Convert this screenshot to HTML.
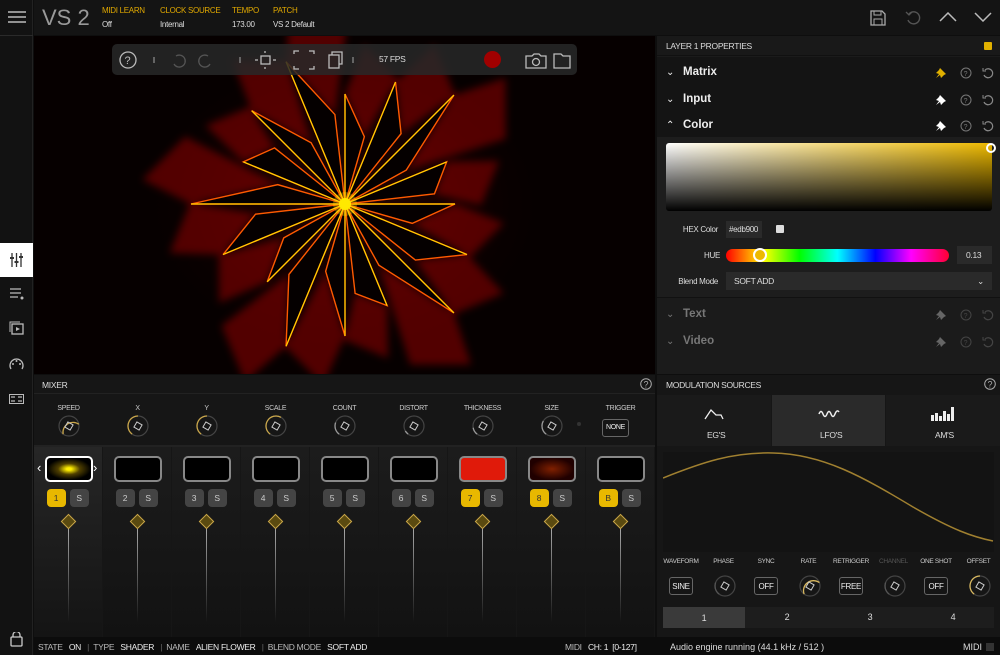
<!DOCTYPE html>
<html><head><meta charset="utf-8"><style>
*{box-sizing:border-box;margin:0;padding:0}
body{width:1000px;height:655px;background:#0e0e0e;font-family:"Liberation Sans Narrow","Liberation Sans",sans-serif;color:#ddd;position:relative;overflow:hidden;font-size:9px;letter-spacing:-0.3px}
.abs{position:absolute}
.y{color:#e0a800}
.lbl{font-size:7px;color:#ccc;text-align:center;letter-spacing:-0.3px}
.btn{border:1px solid #666;border-radius:3px;color:#eee;font-size:8px;text-align:center;background:#151515}
</style></head><body>
<!-- sidebar -->
<div class="abs" style="left:0;top:0;width:33px;height:655px;background:#121212;border-right:1px solid #222"></div>
<div class="abs" style="left:0;top:35px;width:33px;height:1px;background:#2a2a2a"></div>
<svg class="abs" style="left:8px;top:10px" width="18" height="14"><path d="M0 2H18M0 7H18M0 12H18" stroke="#bbb" stroke-width="1.5"/></svg>
<div class="abs" style="left:0;top:243px;width:33px;height:34px;background:#fff"></div>
<svg class="abs" style="left:10px;top:253px" width="13" height="14"><path d="M2 0V14M6.5 0V14M11 0V14" stroke="#333" stroke-width="1.3"/><path d="M0 5H4M4.5 9H8.5M9 4H13" stroke="#333" stroke-width="2"/></svg>
<svg class="abs" style="left:10px;top:288px" width="14" height="12"><path d="M0 1H11M0 5H11M0 9H8" stroke="#bbb" stroke-width="1.3"/><circle cx="12" cy="10" r="1.5" fill="#bbb"/></svg>
<svg class="abs" style="left:9px;top:321px" width="15" height="14"><rect x="3" y="3" width="11" height="10" fill="none" stroke="#bbb" stroke-width="1.3"/><path d="M1 11V1H11" fill="none" stroke="#bbb"/><path d="M7 6L11 8L7 10Z" fill="#bbb"/></svg>
<svg class="abs" style="left:9px;top:357px" width="15" height="14"><path d="M2 12A6.5 6.5 0 1 1 13 12" fill="none" stroke="#bbb" stroke-width="1.3"/><circle cx="4" cy="7" r="1" fill="#bbb"/><circle cx="7.5" cy="4" r="1" fill="#bbb"/><circle cx="11" cy="7" r="1" fill="#bbb"/></svg>
<svg class="abs" style="left:9px;top:394px" width="15" height="10"><rect x="0.5" y="0.5" width="14" height="9" fill="none" stroke="#bbb"/><path d="M2 3H6M9 3H13M2 7H6M9 7H13" stroke="#bbb" stroke-width="1.3"/></svg>
<svg class="abs" style="left:10px;top:632px" width="13" height="15"><path d="M3 5V3A3.5 3.5 0 0 1 10 3V5" fill="none" stroke="#ccc" stroke-width="1.3"/><rect x="1" y="5" width="11" height="9" rx="1" fill="none" stroke="#ccc" stroke-width="1.3"/></svg>

<!-- top bar -->
<div class="abs" style="left:34px;top:0;width:966px;height:35px;background:#141414"></div>
<div class="abs" style="left:42px;top:5px;font-size:22px;color:#999;font-family:'Liberation Sans',sans-serif;letter-spacing:0">VS 2</div>
<div class="abs y" style="left:102px;top:6px;font-size:8px">MIDI LEARN</div><div class="abs" style="left:102px;top:20px;font-size:8px">Off</div>
<div class="abs y" style="left:160px;top:6px;font-size:8px">CLOCK SOURCE</div><div class="abs" style="left:160px;top:20px;font-size:8px">Internal</div>
<div class="abs y" style="left:232px;top:6px;font-size:8px">TEMPO</div><div class="abs" style="left:232px;top:20px;font-size:8px">173.00</div>
<div class="abs y" style="left:273px;top:6px;font-size:8px">PATCH</div><div class="abs" style="left:273px;top:20px;font-size:8px">VS 2 Default</div>
<svg class="abs" style="left:870px;top:10px" width="16" height="16"><path d="M1 1H12L15 4V15H1Z" fill="none" stroke="#aaa" stroke-width="1.3"/><rect x="4" y="1" width="7" height="4" fill="none" stroke="#aaa"/><rect x="4" y="9" width="8" height="6" fill="none" stroke="#aaa"/></svg>
<svg class="abs" style="left:905px;top:10px" width="16" height="16"><path d="M4 4A6 6 0 1 1 3 10" fill="none" stroke="#555" stroke-width="1.4"/><path d="M1 2L4 5L7 2" fill="none" stroke="#555" stroke-width="1.3"/></svg>
<svg class="abs" style="left:939px;top:12px" width="18" height="10"><path d="M1 9L9 1L17 9" fill="none" stroke="#bbb" stroke-width="1.5"/></svg>
<svg class="abs" style="left:974px;top:12px" width="18" height="10"><path d="M1 1L9 9L17 1" fill="none" stroke="#bbb" stroke-width="1.5"/></svg>

<!-- preview -->
<div class="abs" style="left:34px;top:36px;width:621px;height:338px;background:#060000;overflow:hidden">
<svg id="fl" width="621" height="338" style="position:absolute;left:0;top:0">
<defs><radialGradient id="rg" cx="0.5" cy="0.5" r="0.5"><stop offset="0" stop-color="#ff2000" stop-opacity=".6"/><stop offset=".6" stop-color="#a00000" stop-opacity=".25"/><stop offset="1" stop-color="#300000" stop-opacity="0"/></radialGradient>
<filter id="bl"><feGaussianBlur stdDeviation="4"/></filter></defs>
<ellipse cx="311" cy="168" rx="200" ry="150" fill="url(#rg)" opacity=".25"/>
<g id="glow" filter="url(#bl)"></g><g id="star"></g>
<circle cx="311" cy="168" r="6" fill="#ffee00"/><circle cx="311" cy="168" r="12" fill="#ffdd00" opacity=".3"/>
</svg>
</div>
<div class="abs" style="left:112px;top:44px;width:465px;height:31px;background:rgba(40,40,40,.85);border-radius:5px"></div>
<svg class="abs" style="left:118px;top:48px" width="460" height="24" fill="none" stroke="#bbb" stroke-width="1.3">
<circle cx="10" cy="12" r="8"/><text x="6.5" y="16" font-size="11" fill="#bbb" stroke="none" font-family="Liberation Sans">?</text>
<path d="M36 9V15M122 9V15M235 9V15" stroke="#888"/>
<path d="M58 8A6 6 0 1 1 56 16" stroke="#555"/><path d="M90 8A6 6 0 1 0 92 16" stroke="#555"/>
<rect x="143" y="8" width="9" height="8"/><path d="M140 12H137M155 12H158M147 5V3M147 19V21"/>
<path d="M176 6V3H181M191 3H196V6M196 18V21H191M181 21H176V18"/>
<rect x="211" y="7" width="10" height="13"/><path d="M214 7V4H224V16H221"/>
<path d="M408 8H414L416 6H421L423 8H428V20H408Z"/><circle cx="418" cy="14" r="3.5"/>
<path d="M436 6H443L445 8H452V20H436Z"/>
</svg>
<div class="abs" style="left:379px;top:54px;font-size:8.5px;color:#ddd">57 FPS</div>
<div class="abs" style="left:484px;top:51px;width:17px;height:17px;border-radius:50%;background:#a00000"></div>

<!-- right properties -->
<div class="abs" style="left:657px;top:36px;width:343px;height:338px;background:#1b1b1b"></div>
<div class="abs" style="left:657px;top:36px;width:343px;height:20px;background:#191919;border-bottom:1px solid #111"></div>
<div class="abs" style="left:666px;top:41px;font-size:8.5px;color:#ddd">LAYER 1 PROPERTIES</div>
<div class="abs" style="left:984px;top:42px;width:8px;height:8px;background:#e0b000;border-radius:1px"></div>
<div class="abs" style="left:657px;top:57px;width:343px;height:80px;background:#141414"></div>
<div id="rows"></div>
<div class="abs" style="left:657px;top:137px;width:343px;height:160px;background:#1d1d1d"></div>
<div class="abs" style="left:666px;top:143px;width:326px;height:68px;border-radius:3px;background:linear-gradient(to bottom,rgba(0,0,0,0),#000),linear-gradient(to right,#fff,#edb900)"></div>
<div class="abs" style="left:986px;top:143px;width:10px;height:10px;border:2px solid #fff;border-radius:50%"></div>
<div class="abs" style="left:680px;top:225px;font-size:8px;color:#ddd;width:38px;text-align:right">HEX Color</div>
<div class="abs" style="left:726px;top:221px;width:36px;height:17px;background:#2a2a2a;font-size:8px;padding:4px 3px;color:#ddd">#edb900</div>
<div class="abs" style="left:776px;top:225px;width:8px;height:8px;background:#ddd;border-radius:1px"></div>
<div class="abs" style="left:704px;top:251px;font-size:8px;color:#ddd">HUE</div>
<div class="abs" style="left:726px;top:249px;width:223px;height:13px;border-radius:7px;background:linear-gradient(to right,#f00,#ff0 17%,#0f0 33%,#0ff 50%,#00f 67%,#f0f 83%,#f03)"></div>
<div class="abs" style="left:753px;top:248px;width:14px;height:14px;border-radius:50%;border:2px solid #fff;background:#edb900"></div>
<div class="abs" style="left:957px;top:246px;width:35px;height:18px;background:#2a2a2a;font-size:8.5px;padding:4px 0 0 9px;color:#ddd">0.13</div>
<div class="abs" style="left:672px;top:277px;font-size:8px;color:#ddd;width:46px;text-align:right">Blend Mode</div>
<div class="abs" style="left:726px;top:272px;width:266px;height:18px;background:#2a2a2a;font-size:8.5px;padding:4px 8px;color:#ddd">SOFT ADD<span style="float:right">⌄</span></div>
<div class="abs" style="left:657px;top:297px;width:343px;height:1px;background:#111"></div>

<!-- mixer -->
<div class="abs" style="left:34px;top:375px;width:621px;height:262px;background:#161616"></div>
<div class="abs" style="left:42px;top:380px;font-size:8.5px;color:#ddd">MIXER</div>
<svg class="abs" style="left:640px;top:378px" width="12" height="12"><circle cx="6" cy="6" r="5.3" fill="none" stroke="#aaa"/><text x="3.5" y="9.5" font-size="9" fill="#aaa" font-family="Liberation Sans">?</text></svg>
<div class="abs" style="left:34px;top:393px;width:621px;height:1px;background:#222"></div>
<div class="abs" style="left:34px;top:445px;width:621px;height:2px;background:#222"></div>
<div id="mix"></div>
<div class="abs btn" style="left:602px;top:419px;width:27px;height:18px;padding-top:4px;font-size:7px">NONE</div>
<div class="abs" style="left:577px;top:422px;width:4px;height:4px;border-radius:50%;background:#333"></div>

<!-- bottom bar -->
<div class="abs" style="left:34px;top:637px;width:966px;height:18px;background:#0c0c0c"></div>
<div class="abs" style="left:38px;top:642px;font-size:8.5px;color:#bbb;white-space:nowrap">STATE&nbsp;&nbsp;&nbsp;<span style="color:#eee">ON</span>&nbsp;&nbsp;&nbsp;<span style="color:#666">|</span>&nbsp;&nbsp;TYPE&nbsp;&nbsp;&nbsp;<span style="color:#eee">SHADER</span>&nbsp;&nbsp;&nbsp;<span style="color:#666">|</span>&nbsp;&nbsp;NAME&nbsp;&nbsp;&nbsp;<span style="color:#eee">ALIEN FLOWER</span>&nbsp;&nbsp;&nbsp;<span style="color:#666">|</span>&nbsp;&nbsp;BLEND MODE&nbsp;&nbsp;&nbsp;<span style="color:#eee">SOFT ADD</span></div>
<div class="abs" style="left:565px;top:642px;font-size:8.5px;color:#bbb">MIDI&nbsp;&nbsp;&nbsp;<span style="color:#eee">CH: 1&nbsp;&nbsp;[0-127]</span></div>
<div class="abs" style="left:670px;top:642px;font-size:9px;color:#ddd;font-family:'Liberation Sans',sans-serif;letter-spacing:0">Audio engine running (44.1 kHz / 512 )</div>
<div class="abs" style="left:963px;top:642px;font-size:9px;color:#ddd;font-family:'Liberation Sans',sans-serif;letter-spacing:0">MIDI</div>
<div class="abs" style="left:986px;top:643px;width:8px;height:8px;background:#333"></div>

<!-- modulation -->
<div class="abs" style="left:657px;top:375px;width:343px;height:262px;background:#161616"></div>
<div class="abs" style="left:666px;top:380px;font-size:8.5px;color:#ddd">MODULATION SOURCES</div>
<svg class="abs" style="left:984px;top:378px" width="12" height="12"><circle cx="6" cy="6" r="5.3" fill="none" stroke="#aaa"/><text x="3.5" y="9.5" font-size="9" fill="#aaa" font-family="Liberation Sans">?</text></svg>
<div class="abs" style="left:657px;top:395px;width:114px;height:51px;background:#1a1a1a"></div>
<div class="abs" style="left:772px;top:395px;width:113px;height:51px;background:#2a2a2a"></div>
<div class="abs" style="left:886px;top:395px;width:114px;height:51px;background:#1a1a1a"></div>
<svg class="abs" style="left:704px;top:408px" width="20" height="12"><path d="M1 11L7 2L12 7H17L19 11" fill="none" stroke="#eee" stroke-width="1.3"/></svg>
<svg class="abs" style="left:818px;top:408px" width="22" height="12"><path d="M1 6Q3 1 5 6T9 6T13 6T17 6T21 4" fill="none" stroke="#eee" stroke-width="1.5"/></svg>
<svg class="abs" style="left:931px;top:405px" width="26" height="16" fill="#eee"><rect x="0" y="10" width="3" height="6"/><rect x="4" y="8" width="3" height="8"/><rect x="8" y="11" width="3" height="5"/><rect x="12" y="6" width="3" height="10"/><rect x="16" y="9" width="3" height="7"/><rect x="20" y="2" width="3" height="14"/></svg>
<div class="abs" style="left:707px;top:430px;font-size:8.5px;color:#ddd">EG'S</div>
<div class="abs" style="left:820px;top:430px;font-size:8.5px;color:#ddd">LFO'S</div>
<div class="abs" style="left:935px;top:430px;font-size:8.5px;color:#ddd">AM'S</div>
<div class="abs" style="left:663px;top:452px;width:331px;height:100px;background:#131313"></div>
<svg class="abs" style="left:663px;top:452px" width="331" height="100"><path d="M0 26C40 10 70 0 110 1C160 2 200 25 250 55C290 78 310 85 330 89" fill="none" stroke="#a08030" stroke-width="1.5"/></svg>
<div id="modc"></div>
<div class="abs" style="left:663px;top:607px;width:331px;height:21px;background:#1d1d1d"></div>
<div class="abs" style="left:663px;top:607px;width:82px;height:21px;background:#3a3a3a;text-align:center;font-size:9px;padding-top:6px">1</div>
<div class="abs" style="left:746px;top:612px;width:82px;text-align:center;font-size:9px">2</div>
<div class="abs" style="left:829px;top:612px;width:82px;text-align:center;font-size:9px">3</div>
<div class="abs" style="left:912px;top:612px;width:82px;text-align:center;font-size:9px">4</div>

<script>
(function(){
 var cx=311,cy=168,N=16,s='',g='';
 for(var i=0;i<N;i++){
  var a=i*2*Math.PI/N, R1=110+(i%3)*22, R2=70+(i%2)*20, d=0.28;
  var p1=[cx+R1*Math.cos(a),cy+R1*Math.sin(a)], p2=[cx+R2*Math.cos(a+d),cy+R2*Math.sin(a+d)];
  var R3=R1+50;
  g+='<polygon points="'+p1+' '+(cx+R3*Math.cos(a+0.12))+','+(cy+R3*Math.sin(a+0.12))+' '+(cx+R3*0.85*Math.cos(a+d+0.12))+','+(cy+R3*0.85*Math.sin(a+d+0.12))+' '+p2+'" fill="#b00800" opacity=".45"/>';
  s+='<polygon points="'+cx+','+cy+' '+p1+' '+p2+'" fill="#050000" stroke="#ff5a00" stroke-width="1.4"/>';
  s+='<line x1="'+cx+'" y1="'+cy+'" x2="'+p1[0]+'" y2="'+p1[1]+'" stroke="#ffd000" stroke-width="1.2"/>';
 }
 document.getElementById('star').innerHTML=s;document.getElementById('glow').innerHTML=g;
})();
function knob(x,y,r,col,ang){var a=ang*Math.PI/180;
 return '<svg class="abs" style="left:'+(x-r-2)+'px;top:'+(y-r-2)+'px" width="'+(2*r+4)+'" height="'+(2*r+4)+'"><circle cx="'+(r+2)+'" cy="'+(r+2)+'" r="'+r+'" fill="none" stroke="#444" stroke-width="1.2"/><path d="M'+(r+2+r*Math.cos(2.2))+' '+(r+2+r*Math.sin(2.2))+'A'+r+' '+r+' 0 0 1 '+(r+2+r*Math.cos(a))+' '+(r+2+r*Math.sin(a))+'" fill="none" stroke="'+col+'" stroke-width="1.3"/><rect x="'+(r-1)+'" y="'+(r-1)+'" width="6" height="6" fill="none" stroke="#ccc" transform="rotate(30 '+(r+2)+' '+(r+2)+')"/></svg>';}
var labs=['SPEED','X','Y','SCALE','COUNT','DISTORT','THICKNESS','SIZE','TRIGGER'],h='';
var angs=[-10,-90,-90,-60,200,150,170,210];
for(var i=0;i<9;i++){var cx=34+69*i+34.5;
 h+='<div class="abs" style="left:'+(34+69*i)+'px;top:447px;width:68px;height:190px;background:'+(i==0?'linear-gradient(#262626,#141414)':'linear-gradient(#1c1c1c,#121212)')+'"></div>';
 h+='<div class="abs lbl" style="left:'+(cx-30)+'px;top:405px;width:60px">'+labs[i]+'</div>';
 if(i<8)h+=knob(cx+0.5,426,10,i<4?'#c9a64a':'#999',angs[i]);
 var bg=i==6?'#e01a0a':(i==7?'radial-gradient(#802000,#200000 70%)':(i==0?'radial-gradient(#ffee00 8%,#504000 35%,#000 70%)':'#000'));
 h+='<div class="abs" style="left:'+(cx-24)+'px;top:456px;width:48px;height:26px;border-radius:5px;border:'+(i==0?'2px solid #fff':'2px solid #888')+';background:'+bg+'"></div>';
 var on=(i==0||i==6||i==7||i==8);
 h+='<div class="abs" style="left:'+(cx-22)+'px;top:489px;width:19px;height:18px;border-radius:4px;background:'+(on?'#e8b800':'#444')+';color:'+(on?'#333':'#ccc')+';text-align:center;font-size:8.5px;padding-top:4px">'+(i==8?'B':i+1)+'</div>';
 h+='<div class="abs" style="left:'+(cx+1)+'px;top:489px;width:19px;height:18px;border-radius:4px;background:#444;color:#ccc;text-align:center;font-size:8.5px;padding-top:4px">S</div>';
 h+='<div class="abs" style="left:'+(cx-1)+'px;top:527px;width:1.5px;height:95px;background:linear-gradient(#aaa,rgba(170,170,170,0))"></div>';
 h+='<div class="abs" style="left:'+(cx-5.5)+'px;top:516px;width:11px;height:11px;transform:rotate(45deg);background:#5a4a10;border:1px solid #c9a64a"></div>';
}
h+='<div class="abs" style="left:37px;top:460px;color:#fff;font-size:13px">‹</div><div class="abs" style="left:93px;top:460px;color:#fff;font-size:13px">›</div>';
document.getElementById('mix').innerHTML=h;
var rows=[['Matrix',73,'#e0b000',1],['Input',100,'#fff',1],['Color',126,'#fff',1],['Text',315,'#666',0],['Video',342,'#666',0]],r='';
rows.forEach(function(o,k){var c=o[3]?'#eee':'#777';
 r+='<div class="abs" style="left:666px;top:'+(o[1]-6)+'px;font-size:10px;color:'+c+'">'+(k==2?'⌃':'⌄')+'</div>';
 r+='<div class="abs" style="left:683px;top:'+(o[1]-7)+'px;font-size:11.5px;font-weight:bold;color:'+c+';font-family:Liberation Sans,sans-serif;letter-spacing:0">'+o[0]+'</div>';
 r+='<svg class="abs" style="left:935px;top:'+(o[1]-6)+'px" width="12" height="12"><path d="M5 1L11 7L9 8L6 11L5 8L1 11L4 7L1 6L4 3Z" fill="'+o[2]+'"/></svg>';
 r+='<svg class="abs" style="left:960px;top:'+(o[1]-6)+'px" width="12" height="12"><circle cx="6" cy="6" r="5" fill="none" stroke="'+(o[3]?'#777':'#444')+'"/><text x="3.6" y="9" font-size="7" fill="'+(o[3]?'#777':'#444')+'" font-family="Liberation Sans">?</text></svg>';
 r+='<svg class="abs" style="left:982px;top:'+(o[1]-6)+'px" width="12" height="12"><path d="M3 3A4.5 4.5 0 1 1 2 8" fill="none" stroke="'+(o[3]?'#888':'#444')+'" stroke-width="1.2"/><path d="M1 1V4H4" fill="none" stroke="'+(o[3]?'#888':'#444')+'"/></svg>';
});
document.getElementById('rows').innerHTML=r;
var ml=['WAVEFORM','PHASE','SYNC','RATE','RETRIGGER','CHANNEL','ONE SHOT','OFFSET'],mh='';
var bt={0:'SINE',2:'OFF',4:'FREE',6:'OFF'};
for(var i=0;i<8;i++){var cx=681+42.5*i;
 mh+='<div class="abs lbl" style="left:'+(cx-21)+'px;top:558px;width:42px;font-size:6.5px;color:'+(i==5?'#555':'#ccc')+'">'+ml[i]+'</div>';
 if(bt[i])mh+='<div class="abs btn" style="left:'+(cx-12)+'px;top:577px;width:24px;height:18px;padding-top:4px">'+bt[i]+'</div>';
 else mh+=knob(cx+1,586,10,(i==3||i==7)?'#d8b860':'#555',i==7?-90:(i==3?-20:200));
}
document.getElementById('modc').innerHTML=mh;
</script>
</body></html>
